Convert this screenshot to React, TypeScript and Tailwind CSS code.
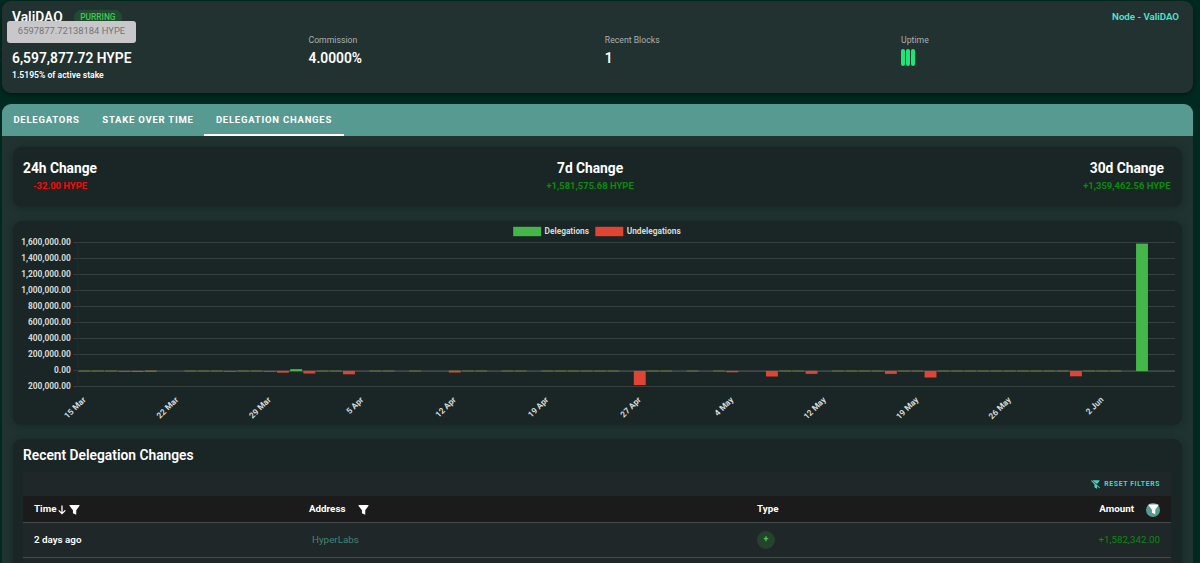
import type { ReactNode } from 'react';

const GREEN = '#45b649';
const RED = '#e04434';

const PLOT_LEFT = 65;
const PLOT_RIGHT = 1162;
const PLOT_TOP = 21.3;
const STEP_Y = 16.06;
const ZERO_Y = 149.7;
const DAYS = 83;
const STEP_X = (PLOT_RIGHT - PLOT_LEFT) / DAYS;

const yLabels = [
  '1,600,000.00',
  '1,400,000.00',
  '1,200,000.00',
  '1,000,000.00',
  '800,000.00',
  '600,000.00',
  '400,000.00',
  '200,000.00',
  '0.00',
  '200,000.00',
];

const xLabels = ['15 Mar', '22 Mar', '29 Mar', '5 Apr', '12 Apr', '19 Apr', '27 Apr', '4 May', '12 May', '19 May', '26 May', '2 Jun'];

// day index -> height in px, positive is delegated and negative undelegated
const bars: [number, number][] = [
  [3, -0.8],
  [4, -1],
  [5, -0.8],
  [11, -0.8],
  [14, -0.8],
  [15, -1.8],
  [16, 2],
  [17, -2.6],
  [20, -3.4],
  [28, -1.6],
  [42, -14.2],
  [49, -1.4],
  [52, -5.6],
  [55, -3],
  [61, -3],
  [64, -6.6],
  [75, -5.4],
  [80, 127.5],
];

const quietDays = [0, 1, 2, 5, 8, 9, 10, 12, 13, 18, 19, 22, 23, 25, 28, 29, 30, 32, 33, 35, 36, 37, 38, 39, 40, 43, 44, 46, 48, 53, 54, 57, 58, 59, 60, 62, 63, 65, 66, 67, 68, 69, 70, 71, 72, 73, 74, 76, 77, 78];

function FilterIcon({ className = '' }: { className?: string }) {
  return (
    <svg className={className} viewBox="0 0 12 12" fill="currentColor">
      <path d="M1 .6h10q.8 0 .5.8L7.9 6.3v5L4.3 9.6V6.3L.5 1.4Q.2.6 1 .6z" />
    </svg>
  );
}

function FilterOffIcon() {
  return (
    <svg className="h-[9px] w-[9px]" viewBox="0 0 18 18" fill="currentColor">
      <path d="M3 .5h13.5q1.2.5.5 1.6L12 8.2 4.3 1.9zM0 1.6 1.3.3 18 14.9 16.7 16.3 12 12.2v5.3L7 15V9L1.8 3.4z" />
    </svg>
  );
}

function Panel({ className = '', children }: { className?: string; children: ReactNode }) {
  return (
    <div className={`rounded-[9px] bg-[#1a2625] shadow-[0_1px_6px_1px_rgba(10,25,23,0.35)] ${className}`}>{children}</div>
  );
}

function Change({ label, value, negative = false }: { label: string; value: string; negative?: boolean }) {
  return (
    <div className="flex flex-col items-center">
      <h3 className="text-[13.8px] leading-5 font-bold tracking-[-0.02px] text-white">{label}</h3>
      <p className={`mt-px text-[9.45px] leading-[14px] font-bold ${negative ? 'text-[#f90705]' : 'text-[#078c0b]'}`}>{value}</p>
    </div>
  );
}

function DelegationChart() {
  return (
    <svg width="1169" height="204" viewBox="0 0 1169 204" className="block" fontFamily="Roboto, sans-serif" fontSize="8.35" fontWeight="700" fill="#d5d9d8">
      <rect x="500.2" y="5.8" width="28" height="9.4" fill={GREEN} />
      <text x="531.5" y="13">Delegations</text>
      <rect x="582.3" y="5.8" width="28" height="9.4" fill={RED} />
      <text x="613.7" y="13">Undelegations</text>

      {yLabels.map((label, i) => (
        <g key={i}>
          <line x1="60.5" x2={PLOT_RIGHT} y1={Math.floor(PLOT_TOP + i * STEP_Y) + 0.5} y2={Math.floor(PLOT_TOP + i * STEP_Y) + 0.5} stroke="#36413f" />
          <text x="57.8" y={PLOT_TOP + i * STEP_Y + 2.2} textAnchor="end">{label}</text>
        </g>
      ))}
      <line x1={PLOT_LEFT} x2={PLOT_LEFT} y1={PLOT_TOP} y2={ZERO_Y + STEP_Y} stroke="#1f2c2a" />

      {quietDays.map((day) => (
        <rect key={day} x={PLOT_LEFT + day * STEP_X + 0.7} y={ZERO_Y - 0.3} width="11.9" height="1.3" fill="#6f7039" opacity="0.85" />
      ))}
      <line x1={PLOT_LEFT} x2={PLOT_RIGHT} y1="150.5" y2="150.5" stroke="#96443a" opacity="0.6" />
      {bars.map(([day, size]) => (
        <rect
          key={day}
          x={PLOT_LEFT + day * STEP_X + 0.7}
          y={size > 0 ? ZERO_Y + 0.4 - size : ZERO_Y + 0.2}
          width="11.9"
          height={Math.abs(size)}
          fill={size > 0 ? GREEN : RED}
        />
      ))}

      {xLabels.map((label, i) => {
        const x = PLOT_LEFT + STEP_X * (i * 7 + 0.5);
        return (
          <text key={label} transform={`translate(${x + 1.7} 179.3) rotate(-45)`} textAnchor="end">{label}</text>
        );
      })}
    </svg>
  );
}

export default function App() {
  return (
    <div className="relative h-[563px] w-[1200px] overflow-hidden bg-[#00291f] pt-px pl-[2px] font-[Roboto,sans-serif] text-white">
      <section className="h-[92px] w-[1191px] rounded-[9px] bg-[#223230] px-[10px] pt-2 shadow-[0_2px_4px_rgba(0,0,0,0.35)]">
        <div className="flex items-center justify-between">
          <div className="flex h-4 items-center gap-[11px]">
            <h1 className="text-[13.8px] leading-4 font-semibold">ValiDAO</h1>
            <span className="flex h-[15px] items-center rounded-full bg-[#214a31] px-[6.5px] text-[8.4px] font-medium text-[#43c652]">PURRING</span>
          </div>
          <a className="mr-1 text-[9.7px] font-semibold text-[#50e3d0]">Node - ValiDAO</a>
        </div>
        <div className="mt-[9px] grid grid-cols-[296.5px_296.3px_296.3px_1fr]">
          <div>
            <p className="text-[8.7px] leading-3 text-[#a9b1b0]">Total Stake</p>
            <p className="mt-[2px] text-[13.8px] leading-5 font-semibold">6,597,877.72 HYPE</p>
            <p className="mt-[1px] text-[8.6px] leading-3 font-semibold">1.5195% of active stake</p>
          </div>
          <div>
            <p className="text-[8.7px] leading-3 text-[#a9b1b0]">Commission</p>
            <p className="mt-[2px] text-[13.8px] leading-5 font-semibold">4.0000%</p>
          </div>
          <div>
            <p className="text-[8.7px] leading-3 text-[#a9b1b0]">Recent Blocks</p>
            <p className="mt-[2px] text-[13.8px] leading-5 font-semibold">1</p>
          </div>
          <div>
            <p className="text-[8.7px] leading-3 text-[#a9b1b0]">Uptime</p>
            <div className="mt-[3px] flex gap-px">
              <span className="h-[17px] w-1 rounded-full bg-[#1ee676]" />
              <span className="h-[17px] w-1 rounded-full bg-[#1ee676]" />
              <span className="h-[17px] w-1 rounded-full bg-[#1ee676]" />
            </div>
          </div>
        </div>
      </section>

      <div className="absolute top-[21px] left-[7px] flex h-[22px] w-[129px] items-center justify-center rounded-[3px] bg-[#c8c8ca] pb-px text-[9.4px] text-[#737576]">
        6597877.72138184 HYPE
      </div>

      <section className="mt-[11px] h-[480px] w-[1191px] overflow-hidden rounded-t-[9px] bg-[#203331]">
        <nav className="flex h-8 bg-[#579a92] text-[9.5px] font-bold tracking-[0.77px]">
          <button className="w-[88px] pl-px">DELEGATORS</button>
          <button className="w-[114px] pl-[2px]">STAKE OVER TIME</button>
          <button className="w-[140px] border-b-2 border-white pt-[2px]">DELEGATION CHANGES</button>
        </nav>

        <div className="flex flex-col gap-[14px] px-[11px] pt-[11px]">
          <Panel className="flex h-[60px] justify-between pt-[11px] pr-[11.5px] pl-[10px]">
            <Change label="24h Change" value="-32.00 HYPE" negative />
            <Change label="7d Change" value="+1,581,575.68 HYPE" />
            <Change label="30d Change" value="+1,359,462.56 HYPE" />
          </Panel>

          <Panel className="h-[204px]">
            <DelegationChart />
          </Panel>

          <Panel className="h-[140px] pt-[6px] pr-[11px] pl-[10px]">
            <h2 className="text-[13.8px] leading-5 font-semibold">Recent Delegation Changes</h2>
            <div className="mt-[7px] bg-[#1f2729]">
              <div className="flex h-6 items-center justify-end gap-1 pr-[11px] text-[6.9px] font-bold tracking-[0.6px] text-[#43d5c3]">
                <FilterOffIcon />
                <span>RESET FILTERS</span>
              </div>
              <div className="grid h-[27px] grid-cols-[275px_448px_1fr_72px] items-center border-b border-[#454b4b] bg-[#1b1b1b] pt-px pr-[11px] pl-[11px] text-[9.8px] font-bold">
                <div className="flex items-center">
                  Time
                  <svg className="ml-[2px] h-[10px] w-2" viewBox="0 0 8 10" fill="none" stroke="currentColor" strokeWidth="1.3">
                    <path d="M4 .5v8M.7 5.4 4 8.7l3.3-3.3" />
                  </svg>
                  <FilterIcon className="ml-[3px] h-3 w-[11px]" />
                </div>
                <div className="flex items-center gap-[13px]">
                  Address
                  <FilterIcon className="h-3 w-[11px]" />
                </div>
                <div>Type</div>
                <div className="flex items-center justify-end gap-3">
                  Amount
                  <span className="flex h-[14px] w-[14px] shrink-0 items-center justify-center rounded-full bg-[#579a92]">
                    <FilterIcon className="h-[11px] w-[11px]" />
                  </span>
                </div>
              </div>
              <div className="grid h-[35px] grid-cols-[275px_448px_1fr_72px] items-center border-b border-[#454b4b] pr-[11px] pl-[11px] text-[9.8px]">
                <span className="font-semibold">2 days ago</span>
                <a className="pl-[3px] text-[#438475]">HyperLabs</a>
                <span className="flex h-[18px] w-[18px] items-center justify-center rounded-full bg-[#24422c] text-[9px] font-bold text-[#43c652]">+</span>
                <span className="text-right text-[#078c0b]">+1,582,342.00</span>
              </div>
              <div className="h-4" />
            </div>
          </Panel>
        </div>
      </section>
    </div>
  );
}
